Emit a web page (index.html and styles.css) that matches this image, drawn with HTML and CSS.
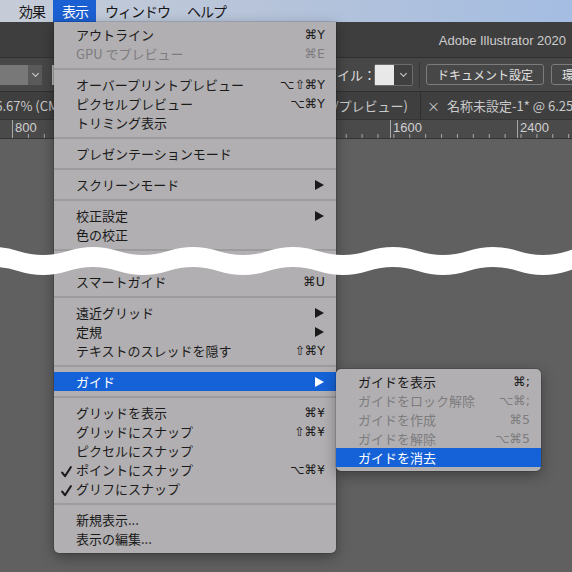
FILE: index.html
```html
<!DOCTYPE html>
<html lang="ja">

<head>
	<meta charset="utf-8">
	<title>表示メニュー</title>
	<link rel="stylesheet" href="styles.css">
</head>

<body>

	<div class="menubar">
		<span class="menubar-item">効果</span>
		<span class="menubar-item active">表示</span>
		<span class="menubar-item">ウィンドウ</span>
		<span class="menubar-item">ヘルプ</span>
	</div>

	<div class="app">
		<div class="titlebar">Adobe Illustrator 2020</div>

		<div class="controlbar">
			<div class="dropdown"><span class="dropdown-field"></span><span class="chevron"></span></div>
			<span class="sliver"></span>
			<div class="control-group">
				<span class="control-label">スタイル：</span>
				<div class="swatch-box"><span class="swatch"></span><span class="chevron"></span></div>
				<span class="divider"></span>
				<button type="button" class="doc-button">ドキュメント設定</button>
				<button type="button" class="doc-button">環境設定</button>
			</div>
		</div>

		<div class="tabbar">
			<div class="tab tab-left">66.67% (CMYK/プレビュー)</div>
			<div class="tab tab-mid">@ 66.67% (CMYK/プレビュー)</div>
			<div class="tab tab-active"><span class="tab-close">×</span>名称未設定-1* @ 6.25% (CMYK/プレビュー)</div>
		</div>

		<div class="ruler">
			<span class="ruler-mark" style="left: 12px">800</span>
			<span class="ruler-mark" style="left: 390px">1600</span>
			<span class="ruler-mark" style="left: 517px">2400</span>
		</div>

		<div class="canvas"></div>
	</div>

	<div class="menu">
		<div class="row"><span></span><span>アウトライン</span><span class="key">⌘Y</span></div>
		<div class="row disabled"><span></span><span>GPU でプレビュー</span><span class="key">⌘E</span></div>
		<div class="sep"></div>
		<div class="row"><span></span><span>オーバープリントプレビュー</span><span class="key">⌥⇧⌘Y</span></div>
		<div class="row"><span></span><span>ピクセルプレビュー</span><span class="key">⌥⌘Y</span></div>
		<div class="row"><span></span><span>トリミング表示</span><span class="key"></span></div>
		<div class="sep"></div>
		<div class="row"><span></span><span>プレゼンテーションモード</span><span class="key"></span></div>
		<div class="sep"></div>
		<div class="row"><span></span><span>スクリーンモード</span><span class="key"><i class="arrow"></i></span></div>
		<div class="sep"></div>
		<div class="row"><span></span><span>校正設定</span><span class="key"><i class="arrow"></i></span></div>
		<div class="row"><span></span><span>色の校正</span><span class="key"></span></div>
		<div class="sep"></div>
		<div class="cut-gap"></div>
		<div class="row"><span></span><span>スマートガイド</span><span class="key">⌘U</span></div>
		<div class="sep"></div>
		<div class="row"><span></span><span>遠近グリッド</span><span class="key"><i class="arrow"></i></span></div>
		<div class="row"><span></span><span>定規</span><span class="key"><i class="arrow"></i></span></div>
		<div class="row"><span></span><span>テキストのスレッドを隠す</span><span class="key">⇧⌘Y</span></div>
		<div class="sep"></div>
		<div class="row selected"><span></span><span>ガイド</span><span class="key"><i class="arrow"></i></span></div>
		<div class="sep"></div>
		<div class="row"><span></span><span>グリッドを表示</span><span class="key">⌘¥</span></div>
		<div class="row"><span></span><span>グリッドにスナップ</span><span class="key">⇧⌘¥</span></div>
		<div class="row"><span></span><span>ピクセルにスナップ</span><span class="key"></span></div>
		<div class="row">
			<span class="check"><svg width="11" height="12" viewBox="0 0 11 12"><path d="M1.2 6.6 L4 10.2 L9.8 1.2" fill="none" stroke="#1a1a1a" stroke-width="2.1" stroke-linecap="round" stroke-linejoin="round"/></svg></span>
			<span>ポイントにスナップ</span><span class="key">⌥⌘¥</span>
		</div>
		<div class="row">
			<span class="check"><svg width="11" height="12" viewBox="0 0 11 12"><path d="M1.2 6.6 L4 10.2 L9.8 1.2" fill="none" stroke="#1a1a1a" stroke-width="2.1" stroke-linecap="round" stroke-linejoin="round"/></svg></span>
			<span>グリフにスナップ</span><span class="key"></span>
		</div>
		<div class="sep"></div>
		<div class="row"><span></span><span>新規表示...</span><span class="key"></span></div>
		<div class="row"><span></span><span>表示の編集...</span><span class="key"></span></div>
	</div>

	<div class="menu submenu">
		<div class="row"><span></span><span>ガイドを表示</span><span class="key">⌘;</span></div>
		<div class="row disabled"><span></span><span>ガイドをロック解除</span><span class="key">⌥⌘;</span></div>
		<div class="row disabled"><span></span><span>ガイドを作成</span><span class="key">⌘5</span></div>
		<div class="row disabled"><span></span><span>ガイドを解除</span><span class="key">⌥⌘5</span></div>
		<div class="row selected"><span></span><span>ガイドを消去</span><span class="key"></span></div>
	</div>

	<!-- cut mark over the long menu -->
	<svg class="cut" width="572" height="50" viewBox="0 0 572 50">
		<path d="M-32,15 Q-7,7 18,15 T68,15 T118,15 T168,15 T218,15 T268,15 T318,15 T368,15 T418,15 T468,15 T518,15 T568,15 T618,15
			L618,35 Q593,27 568,35 T518,35 T468,35 T418,35 T368,35 T318,35 T268,35 T218,35 T168,35 T118,35 T68,35 T18,35 T-32,35 Z" fill="#fff"/>
	</svg>

</body>
</html>
```

FILE: styles.css
```css
body {
	margin: 0;
	width: 572px;
	height: 572px;
	overflow: hidden;
	position: relative;
	background: #606060;
	font-family: "Noto Sans CJK JP", "Liberation Sans", sans-serif;
}

.menubar {
	height: 22px;
	display: flex;
	padding-left: 10px;
	background: linear-gradient(90deg, #c6ccd7, #b5c3da 50%, #a4bde2);
	font-size: 14px;
	line-height: 22px;
	letter-spacing: -1px;
	color: #161616;
}

.menubar-item {
	padding: 0 8px 0 9px;
}

.menubar-item.active {
	background: #1b60d2;
	color: #fff;
}

/* dark app window behind the menu */

.titlebar {
	height: 35px;
	background: #3e3e3e;
	color: #cdcdcd;
	font-family: "Liberation Sans", sans-serif;
	font-size: 13px;
	line-height: 38px;
	text-align: right;
	padding-right: 6px;
}

.controlbar {
	height: 33px;
	border-top: 1px solid #303030;
	background: #474747;
	display: flex;
	align-items: center;
	white-space: nowrap;
}

.controlbar > *,
.control-group > * {
	flex: none;
}

.dropdown,
.swatch-box {
	display: flex;
	height: 20px;
}

.dropdown-field {
	width: 28px;
	background: #787878;
}

.chevron {
	width: 18px;
	display: flex;
	align-items: center;
	justify-content: center;
	background: #404040;
}

.chevron::after {
	content: "";
	width: 4px;
	height: 4px;
	margin-top: -3px;
	border-right: 1px solid #cfcfcf;
	border-bottom: 1px solid #cfcfcf;
	transform: rotate(45deg);
}

.dropdown .chevron {
	width: 14px;
	background: #5a5a5a;
}

.sliver {
	width: 20px;
	height: 20px;
	margin-left: 10px;
	background: #bdbdbd;
}

.control-group {
	display: flex;
	align-items: center;
	margin-left: 239px;
}

.control-label {
	color: #dedede;
	font-size: 13px;
	margin-right: -2px;
}

.swatch-box {
	border: 1px solid #6c6c6c;
	border-radius: 2px;
}

.swatch {
	width: 19px;
	background: #e8e8e8;
}

.divider {
	width: 1px;
	height: 26px;
	margin: 0 6px;
	background: #363636;
}

.doc-button {
	height: 21px;
	padding: 0 10px;
	margin-right: 7px;
	border: 1px solid #7c7c7c;
	border-radius: 3px;
	background: transparent;
	color: #e2e2e2;
	font-family: inherit;
	font-size: 12px;
	line-height: 19px;
}

.tabbar {
	height: 27px;
	border-top: 1px solid #303030;
	background: #3f3f3f;
	display: flex;
	color: #c9c9c9;
	font-size: 13px;
	line-height: 27px;
	white-space: nowrap;
}

.tab {
	overflow: hidden;
	border-right: 1px solid #2f2f2f;
	flex: none;
}

.tab-left {
	width: 220px;
	margin-left: -12px;
}

.tab-mid {
	width: 212px;
	padding-right: 12px;
	box-sizing: border-box;
	text-align: right;
}

.tab-active {
	flex: 1 0 auto;
	padding-left: 6px;
	border-right: none;
}

.tab-close {
	margin-right: 7px;
}

.ruler {
	height: 18px;
	position: relative;
	border-top: 1px solid #353535;
	border-bottom: 1px solid #353535;
	background-color: #4a4a4a;
	background-image: linear-gradient(90deg, #a8a8a8 1px, transparent 1px);
	background-size: 15.9px 4px;
	background-position: 12px bottom;
	background-repeat: repeat-x;
}

.ruler-mark {
	position: absolute;
	top: 0;
	height: 18px;
	padding-left: 2px;
	border-left: 1px solid #a8a8a8;
	color: #cfcfcf;
	font-family: "Liberation Sans", sans-serif;
	font-size: 13px;
	line-height: 16px;
}

/* menus */

.menu {
	position: absolute;
	left: 54px;
	top: 22px;
	width: 282px;
	padding: 3px 0 5px;
	background: #b1afb1;
	border-radius: 0 0 5px 5px;
	box-shadow: 0 4px 14px rgba(0, 0, 0, 0.35), 0 0 0 1px rgba(0, 0, 0, 0.12);
	color: #1a1a1a;
	font-size: 13px;
}

.submenu {
	left: 336px;
	top: 369px;
	width: 205px;
	padding: 3px 0 4px;
	border-radius: 5px;
}

.row {
	display: grid;
	grid-template-columns: 22px 1fr auto;
	height: 19px;
	line-height: 19px;
	padding-right: 11px;
	white-space: nowrap;
}

.row.disabled {
	color: #7d7c7e;
}

.row.selected {
	background: #1562d8;
	color: #fff;
}

.key {
	font-family: "DejaVu Sans", "Liberation Sans", sans-serif;
	font-size: 12.5px;
	text-align: right;
}

.check {
	padding: 3px 0 0 7px;
}

.arrow {
	display: inline-block;
	margin-right: 1px;
	border-left: 9px solid #1a1a1a;
	border-top: 5px solid transparent;
	border-bottom: 5px solid transparent;
	vertical-align: -1px;
}

.selected .arrow {
	border-left-color: #fff;
}

.sep {
	height: 2px;
	margin: 5px 0;
	background: #9d9b9d;
}

.cut-gap {
	height: 16px;
}

.cut {
	position: absolute;
	left: 0;
	top: 236px;
}
```
